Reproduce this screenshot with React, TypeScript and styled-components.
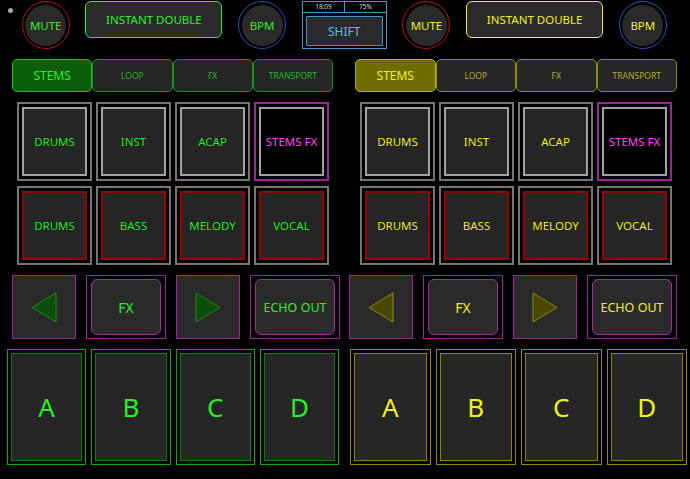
import styled, { createGlobalStyle } from "styled-components";

const GlobalStyle = createGlobalStyle`
  html, body {
    margin: 0;
    padding: 0;
    background: #000;
  }
  body {
    font-family: "Noto Sans", "Open Sans", sans-serif;
  }
`;

interface IDeckColors {
  text: string;
  dim: string;
  tabBorder: string;
  tabActive: string;
  tabActiveBorder: string;
  padOuter: string;
  padInner: string;
  arrowFill: string;
  arrowStroke: string;
}

const GREEN: IDeckColors = {
  text: "#2af02a",
  dim: "#25b525",
  tabBorder: "#1b8f1b",
  tabActive: "#0b5c0b",
  tabActiveBorder: "#22c022",
  padOuter: "#10a810",
  padInner: "#0c7e0c",
  arrowFill: "#0b4d0b",
  arrowStroke: "#1c8c1c",
};

const YELLOW: IDeckColors = {
  text: "#f4f01e",
  dim: "#b4b028",
  tabBorder: "#8e8c10",
  tabActive: "#6f6d00",
  tabActiveBorder: "#b8b400",
  padOuter: "#8e8c00",
  padInner: "#8a8800",
  arrowFill: "#4a4800",
  arrowStroke: "#8a8810",
};

// horizontal geometry of each deck's rows (insets from deck edge)
interface IDeckGeometry {
  tabs: [number, number];
  pads: [number, number];
  controls: [number, number];
  hotcues: [number, number];
}

const LEFT_GEO: IDeckGeometry = {
  tabs: [5, 321],
  pads: [10, 312],
  controls: [5, 328],
  hotcues: [0, 332],
};

const RIGHT_GEO: IDeckGeometry = {
  tabs: [6, 322],
  pads: [11, 312],
  controls: [0, 328],
  hotcues: [1, 337],
};

const TABS = ["STEMS", "LOOP", "FX", "TRANSPORT"];
const STEMS = ["DRUMS", "INST", "ACAP"];
const PARTS = ["DRUMS", "BASS", "MELODY", "VOCAL"];
const CUES = ["A", "B", "C", "D"];

const Screen = styled.div`
  width: 690px;
  height: 479px;
  overflow: hidden;
  background: #000;
  padding-top: 1px;
  box-sizing: border-box;
`;

const TopBar = styled.div`
  display: flex;
  align-items: flex-start;
  gap: 15.7px;
  padding-left: 8px;
  height: 49px;
`;

const Led = styled.div`
  width: 5px;
  height: 5px;
  margin: 7px -7px 0 0;
  border-radius: 50%;
  background: #a8a8a8;
`;

const RoundButton = styled.div<{ $ring: string; $color: string }>`
  position: relative;
  width: 48px;
  height: 48px;
  flex: none;
  box-sizing: border-box;
  border-radius: 50%;
  border: 1.5px solid ${({ $ring }) => $ring};
  background: #000;
  display: flex;
  align-items: center;
  justify-content: center;
  color: ${({ $color }) => $color};
  font-size: 11.5px;

  &::before {
    content: "";
    position: absolute;
    inset: 2.5px;
    border-radius: 50%;
    background: #2a2a2a;
  }

  span {
    position: relative;
  }
`;

const WideButton = styled.div<{ $color: string }>`
  width: 137px;
  height: 37px;
  flex: none;
  box-sizing: border-box;
  border: 1.5px solid ${({ $color }) => $color};
  border-radius: 6px;
  background: #2a2a2a;
  display: flex;
  align-items: center;
  justify-content: center;
  color: ${({ $color }) => $color};
  font-size: 11.5px;
`;

const ShiftPanel = styled.div`
  width: 85px;
  height: 48px;
  flex: none;
  box-sizing: border-box;
  border: 1px solid #3a9ccf;
  display: flex;
  flex-direction: column;
`;

const InfoRow = styled.div`
  display: grid;
  grid-template-columns: 1fr 1fr;
  height: 10px;
  border-bottom: 1px solid #3a9ccf;
  font-size: 6.5px;
  line-height: 10px;
  color: #d8d8d8;
  text-align: center;

  span + span {
    border-left: 1px solid #3a9ccf;
  }
`;

const ShiftButton = styled.div`
  margin: 3px 3px 2px;
  flex: 1;
  box-sizing: border-box;
  border: 1px solid #3a9ccf;
  border-radius: 1px;
  background: #2a2a2a;
  color: #5fbbe8;
  font-size: 12px;
  display: flex;
  align-items: center;
  justify-content: center;
`;

const Decks = styled.div`
  display: flex;
  gap: 9px;
  padding: 9px 0 0 7px;
`;

const Deck = styled.div`
  display: flex;
  flex-direction: column;
  align-items: flex-start;
  gap: 10px;
`;

const Row = styled.div<{ $inset: number; $width: number }>`
  margin-left: ${({ $inset }) => $inset}px;
  width: ${({ $width }) => $width}px;
`;

const TabStrip = styled(Row)`
  display: grid;
  grid-template-columns: repeat(4, 1fr);
  height: 33px;
`;

const Tab = styled.div<{ $active: boolean; $c: IDeckColors }>`
  box-sizing: border-box;
  border: 1px solid
    ${({ $active, $c }) => ($active ? $c.tabActiveBorder : $c.tabBorder)};
  border-radius: 5px;
  background: ${({ $active, $c }) => ($active ? $c.tabActive : "#262626")};
  color: ${({ $active, $c }) => ($active ? $c.text : $c.dim)};
  font-size: ${({ $active }) => ($active ? "12px" : "8.5px")};
  display: flex;
  align-items: center;
  justify-content: center;
`;

const PadGrid = styled(Row)`
  display: grid;
  grid-template-columns: repeat(4, 75px);
  grid-auto-rows: 79px;
  gap: 5px 4px;
`;

const Pad = styled.div<{ $frame: string }>`
  box-sizing: border-box;
  border: 2px solid ${({ $frame }) => $frame};
  padding: 3px;
  display: flex;
`;

const PadFace = styled.div<{ $edge: string; $fill: string; $color: string }>`
  flex: 1;
  box-sizing: border-box;
  border: 2px solid ${({ $edge }) => $edge};
  background: ${({ $fill }) => $fill};
  color: ${({ $color }) => $color};
  font-size: 11.5px;
  display: flex;
  align-items: center;
  justify-content: center;
  text-shadow: 0 0 1px #000;
`;

const ControlRow = styled(Row)`
  display: grid;
  grid-template-columns: 64px 80px 64px 90px;
  justify-content: space-between;
  height: 64px;
`;

const ArrowBox = styled.div`
  box-sizing: border-box;
  border: 1px solid #a020a0;
  background: #2a2a2a;
  display: flex;
  align-items: center;
  justify-content: center;
`;

const FxFrame = styled.div`
  box-sizing: border-box;
  border: 1px solid #a020a0;
  padding: 3px 4px;
  display: flex;
`;

const FxButton = styled.div<{ $color: string; $size: number }>`
  flex: 1;
  box-sizing: border-box;
  border: 1px solid #a52aa5;
  border-radius: 6px;
  background: #2a2a2a;
  color: ${({ $color }) => $color};
  font-size: ${({ $size }) => $size}px;
  display: flex;
  align-items: center;
  justify-content: center;
`;

const CueGrid = styled(Row)`
  display: grid;
  grid-template-columns: repeat(4, 1fr);
  gap: 5px;
  height: 116px;
`;

const CuePad = styled.div<{ $c: IDeckColors }>`
  box-sizing: border-box;
  border: 1.5px solid ${({ $c }) => $c.padOuter};
  padding: 3px;
  display: flex;
`;

const CueFace = styled.div<{ $c: IDeckColors }>`
  flex: 1;
  box-sizing: border-box;
  border: 1.5px solid ${({ $c }) => $c.padInner};
  background: #262626;
  color: ${({ $c }) => $c.text};
  font-size: 26px;
  display: flex;
  align-items: center;
  justify-content: center;
`;

const Arrow = ({ dir, c }: { dir: "left" | "right"; c: IDeckColors }) => (
  <svg width="26" height="31" viewBox="0 0 26 31">
    <polygon
      points={dir === "left" ? "1,15.5 25,1 25,30" : "25,15.5 1,1 1,30"}
      fill={c.arrowFill}
      stroke={c.arrowStroke}
      strokeWidth="1"
    />
  </svg>
);

const DeckTop = ({ c }: { c: IDeckColors }) => (
  <>
    <RoundButton $ring="#c01010" $color={c.text}>
      <span>MUTE</span>
    </RoundButton>
    <WideButton $color={c.text}>INSTANT DOUBLE</WideButton>
    <RoundButton $ring="#1a56c4" $color={c.text}>
      <span>BPM</span>
    </RoundButton>
  </>
);

const DeckPanel = ({ c, geo }: { c: IDeckColors; geo: IDeckGeometry }) => (
  <Deck>
    <TabStrip $inset={geo.tabs[0]} $width={geo.tabs[1]}>
      {TABS.map((t, i) => (
        <Tab key={t} $active={i === 0} $c={c}>
          {t}
        </Tab>
      ))}
    </TabStrip>
    <PadGrid $inset={geo.pads[0]} $width={geo.pads[1]}>
      {STEMS.map((s) => (
        <Pad key={s} $frame="#767676">
          <PadFace $edge="#a2a2a2" $fill="#262626" $color={c.text}>
            {s}
          </PadFace>
        </Pad>
      ))}
      <Pad $frame="#a021a0">
        <PadFace $edge="#a2a2a2" $fill="#000" $color="#ff48ff">
          STEMS FX
        </PadFace>
      </Pad>
      {PARTS.map((p) => (
        <Pad key={p} $frame="#767676">
          <PadFace $edge="#9a0000" $fill="#262626" $color={c.text}>
            {p}
          </PadFace>
        </Pad>
      ))}
    </PadGrid>
    <ControlRow $inset={geo.controls[0]} $width={geo.controls[1]}>
      <ArrowBox>
        <Arrow dir="left" c={c} />
      </ArrowBox>
      <FxFrame>
        <FxButton $color={c.text} $size={14}>
          FX
        </FxButton>
      </FxFrame>
      <ArrowBox>
        <Arrow dir="right" c={c} />
      </ArrowBox>
      <FxFrame>
        <FxButton $color={c.text} $size={12.5}>
          ECHO OUT
        </FxButton>
      </FxFrame>
    </ControlRow>
    <CueGrid $inset={geo.hotcues[0]} $width={geo.hotcues[1]}>
      {CUES.map((q) => (
        <CuePad key={q} $c={c}>
          <CueFace $c={c}>{q}</CueFace>
        </CuePad>
      ))}
    </CueGrid>
  </Deck>
);

export default function App() {
  return (
    <Screen>
      <GlobalStyle />
      <TopBar>
        <Led />
        <DeckTop c={GREEN} />
        <ShiftPanel>
          <InfoRow>
            <span>18:09</span>
            <span>75%</span>
          </InfoRow>
          <ShiftButton>SHIFT</ShiftButton>
        </ShiftPanel>
        <DeckTop c={YELLOW} />
      </TopBar>
      <Decks>
        <DeckPanel c={GREEN} geo={LEFT_GEO} />
        <DeckPanel c={YELLOW} geo={RIGHT_GEO} />
      </Decks>
    </Screen>
  );
}
